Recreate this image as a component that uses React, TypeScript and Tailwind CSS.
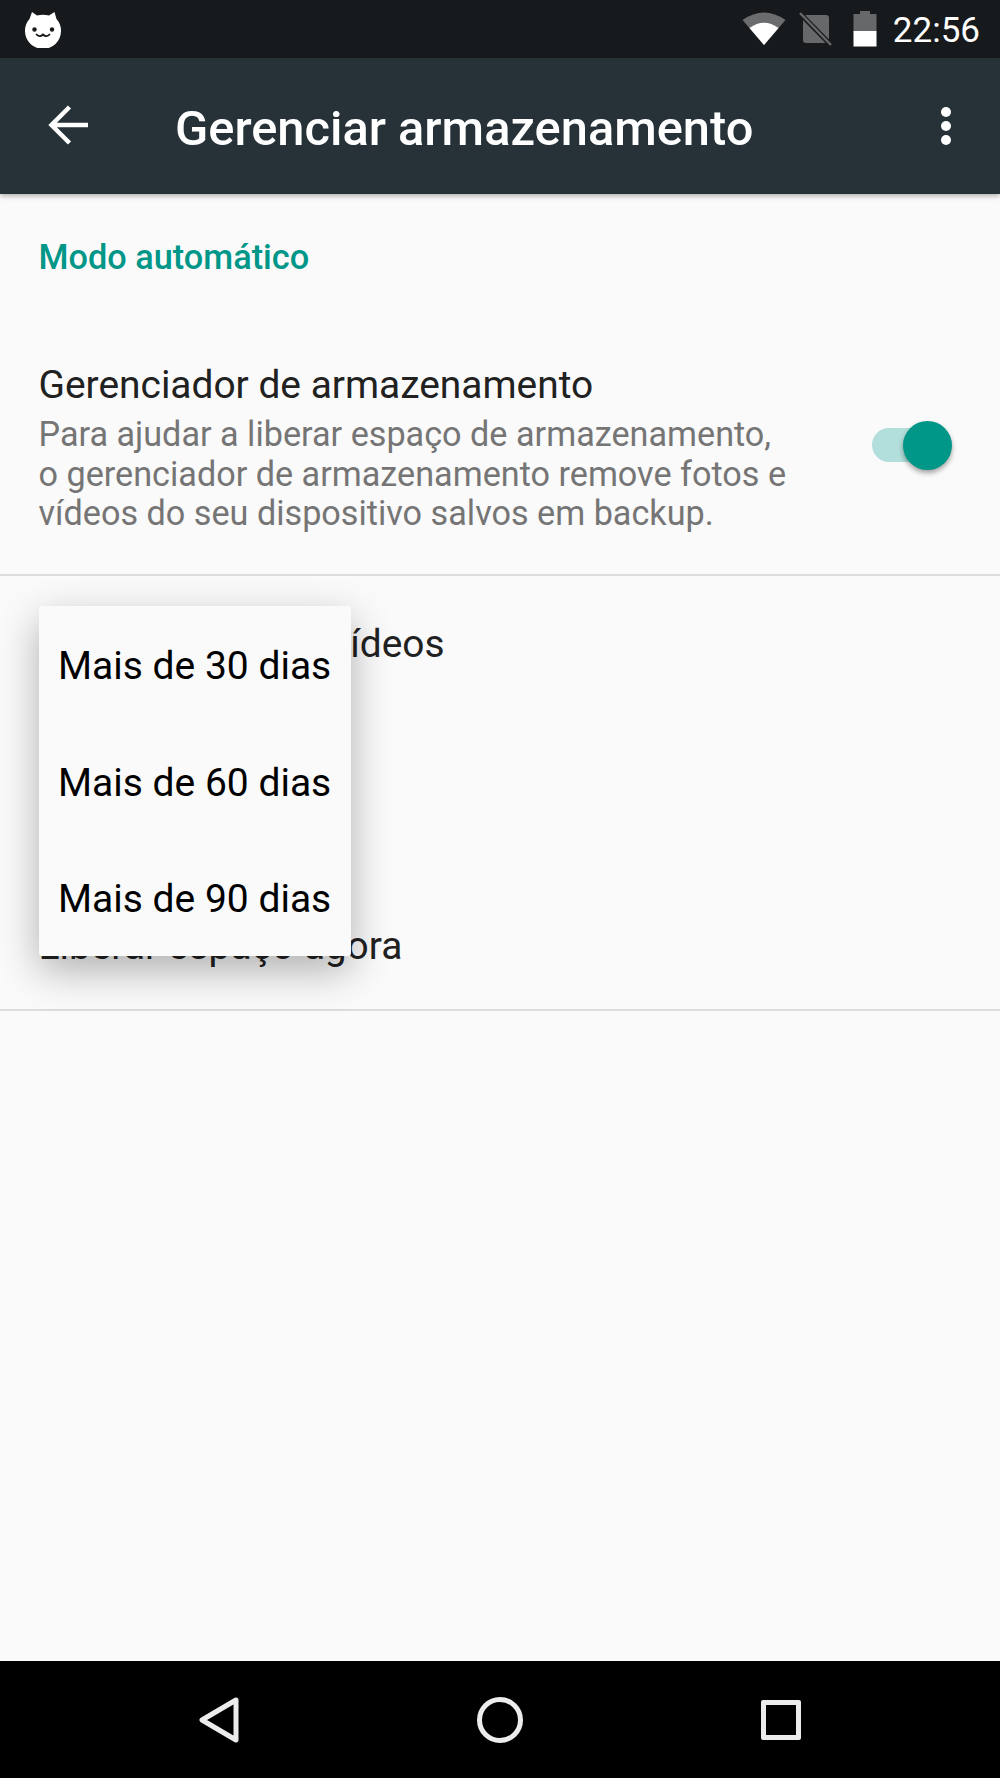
export default function App() {
  return (
    <div className="relative flex h-[1778px] w-[1000px] flex-col overflow-hidden bg-[#fafafa] font-['Roboto',sans-serif]">
      {/* Status bar */}
      <div className="flex h-[58px] shrink-0 items-center justify-between bg-[#171a1d] pl-[24px] pr-[20px]">
        <svg width="38" height="38" viewBox="0 0 38 38" className="mt-[-1px]">
          <path d="M8 2 L13 5.5 Q19 4 25 5.5 L30.5 2 L32.5 9 A18 18 0 1 1 5.5 9 Z" fill="#fff" />
          <circle cx="10.5" cy="19.5" r="2.2" fill="#171a1d" />
          <circle cx="28" cy="19.5" r="2.2" fill="#171a1d" />
          <path d="M12 24 Q15.5 28 19 24.5 Q22.5 28 26 24" stroke="#171a1d" strokeWidth="1.8" fill="none" />
        </svg>
        <div className="flex items-center">
          <svg width="44" height="36" viewBox="0 0 44 36">
            <path d="M0.5 9 Q22 -6 43.5 9 L22 34 Z" fill="#6b6c6e" />
            <path d="M7.5 17 Q22 6.5 36.5 17 L22 34 Z" fill="#fff" />
          </svg>
          <svg width="34" height="34" viewBox="0 0 34 34" className="ml-[13px]">
            <path d="M7 3 H27 Q30 3 30 6 V28 Q30 31 27 31 H7 Q4 31 4 28 V6 Z" fill="#66686a" />
            <path d="M1 1.5 L31 32" stroke="#171a1d" strokeWidth="5" />
            <path d="M1 1 L32 33" stroke="#66686a" strokeWidth="2.5" />
          </svg>
          <svg width="24" height="36" viewBox="0 0 24 36" className="ml-[20px]">
            <path d="M7 0 H17 V3 H23.5 V20 H0.5 V3 H7 Z" fill="#66686a" />
            <rect x="0.5" y="20" width="23" height="15.5" fill="#fff" />
          </svg>
          <span className="ml-[16px] mt-[4px] text-[35px] leading-[58px] text-white">22:56</span>
        </div>
      </div>

      {/* Toolbar */}
      <div className="z-10 flex h-[136px] shrink-0 items-center bg-[#263238] shadow-[0_2px_5px_rgba(0,0,0,0.3)]">
        <svg width="42" height="42" viewBox="0 0 42 42" className="ml-[48px] mt-[-3px]">
          <path d="M40 21 H4 M21.5 3 L3.5 21 L21.5 39" stroke="#fff" strokeWidth="4.5" fill="none" />
        </svg>
        <h1 className="ml-[85px] mt-[6px] text-[48.8px] font-medium text-white">Gerenciar armazenamento</h1>
        <div className="ml-auto mr-[49px] flex flex-col gap-[4px]">
          <span className="h-[10px] w-[10px] rounded-full bg-white" />
          <span className="h-[10px] w-[10px] rounded-full bg-white" />
          <span className="h-[10px] w-[10px] rounded-full bg-white" />
        </div>
      </div>

      {/* Content */}
      <div className="flex flex-1 flex-col">
        <div className="pl-[38.5px] pt-[40px] text-[34.3px] font-medium leading-[46px] text-[#009688]">Modo automático</div>
        <div className="mt-[81px] flex items-center justify-between border-b-[2px] border-[#dcdcdc] pb-[40px] pl-[38.5px] pr-[50px]">
          <div>
            <div className="text-[38.9px] leading-[48px] text-[#212121]">Gerenciador de armazenamento</div>
            <p className="mt-[6px] w-[752px] text-[34.2px] leading-[39.5px] text-[#757575]">
              Para ajudar a liberar espaço de armazenamento, o gerenciador de armazenamento remove fotos e vídeos do seu dispositivo salvos em backup.
            </p>
          </div>
          <div className="relative mt-[-5px] h-[34px] w-[78px] rounded-full bg-[#b2dfdb]">
            <span className="absolute right-[-2px] top-[-7px] h-[49px] w-[49px] rounded-full bg-[#009688] shadow-[0_3px_5px_rgba(0,0,0,0.35)]" />
          </div>
        </div>
        <div className="flex h-[435px] flex-col justify-between border-b-[2px] border-[#dcdcdc] pb-[39px] pl-[38.5px] pr-[39px] pt-[44px] text-[38.9px] leading-[48px] text-[#212121]">
          <div>Remover fotos e vídeos</div>
          <div>Liberar espaço agora</div>
        </div>
      </div>

      {/* Nav bar */}
      <div className="flex h-[117px] shrink-0 items-center bg-black">
        <svg width="40" height="46" viewBox="0 0 40 46" className="ml-[199px]">
          <path d="M37 3 L3 23 L37 43 Z" stroke="#ececec" strokeWidth="5" strokeLinejoin="round" fill="none" />
        </svg>
        <span className="ml-[238px] h-[46px] w-[46px] rounded-full border-[5px] border-[#ececec]" />
        <span className="ml-[238px] h-[40px] w-[40px] rounded-[2px] border-[5px] border-[#ececec]" />
      </div>

      {/* Popup menu */}
      <div className="absolute left-[39px] top-[606px] flex h-[350px] w-[312px] flex-col rounded-[3px] bg-[#fafafa] pl-[19px] pt-[2px] text-[39px] text-black shadow-[0_14px_40px_rgba(0,0,0,0.3)]">
        <div className="flex h-[117px] shrink-0 items-center">Mais de 30 dias</div>
        <div className="flex h-[117px] shrink-0 items-center">Mais de 60 dias</div>
        <div className="flex h-[114px] shrink-0 items-center pt-[1px]">Mais de 90 dias</div>
      </div>
    </div>
  );
}
